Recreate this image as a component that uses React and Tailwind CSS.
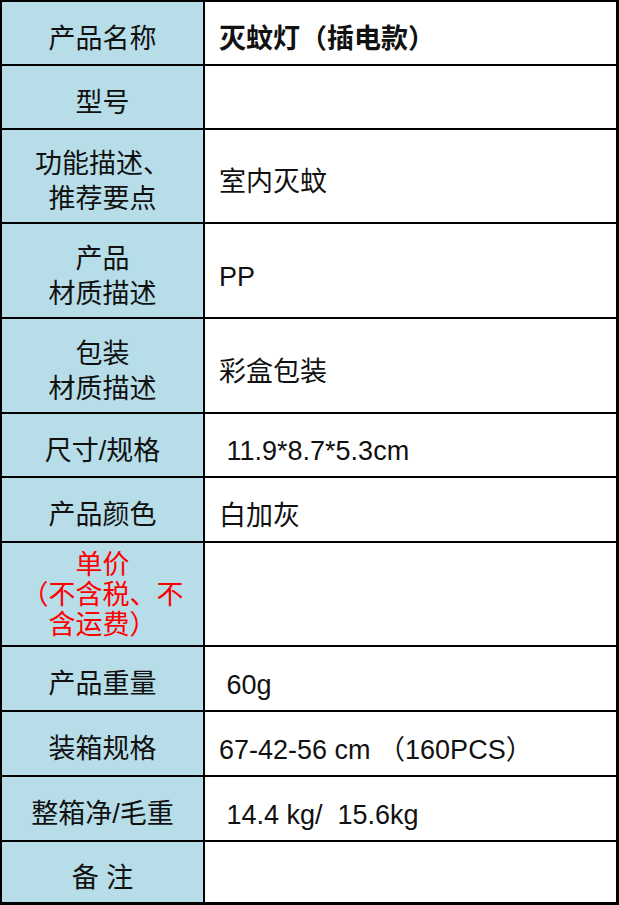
const rows = [
  { label: ["产品名称"], value: "灭蚊灯（插电款）", h: "h-[64px]", bold: true },
  { label: ["型号"], value: "", h: "h-[64px]" },
  { label: ["功能描述、", "推荐要点"], value: "室内灭蚊", h: "h-[94px]" },
  { label: ["产品", "材质描述"], value: "PP", h: "h-[95px]" },
  { label: ["包装", "材质描述"], value: "彩盒包装", h: "h-[95px]" },
  { label: ["尺寸/规格"], value: " 11.9*8.7*5.3cm", h: "h-[64px]" },
  { label: ["产品颜色"], value: "白加灰", h: "h-[65px]" },
  { label: ["单价", "（不含税、不", "含运费）"], value: "", h: "h-[104px]", red: true },
  { label: ["产品重量"], value: " 60g", h: "h-[65px]" },
  { label: ["装箱规格"], value: "67-42-56 cm （160PCS）", h: "h-[65px]" },
  { label: ["整箱净/毛重"], value: " 14.4 kg/  15.6kg", h: "h-[65px]" },
  { label: ["备 注"], value: "", h: "h-[60px]", last: true },
];

export default function App() {
  return (
    <div
      className="w-[619px] h-[905px] bg-white border-t-2 border-l-2 border-r-[3px] border-b-[3px] border-black flex flex-col text-[27px] text-[#111]"
      style={{ fontFamily: '"Liberation Sans", "Noto Sans CJK SC", sans-serif' }}
    >
      {rows.map((row, i) => (
        <div
          key={i}
          className={`flex shrink-0 ${row.h} ${row.last ? "" : "border-b-2 border-black"}`}
        >
          <div
            className={`w-[203px] shrink-0 border-r-2 border-black bg-[#b7dde8] flex flex-col items-center justify-center text-center ${
              row.red ? "text-[#ff0000] leading-[30px] pt-[2px]" : "leading-[35px] pt-[12px]"
            }`}
          >
            {row.label.map((line, j) => (
              <div key={j} className="whitespace-pre">
                {line}
              </div>
            ))}
          </div>
          <div
            className={`flex-1 flex items-center pl-[14px] pt-[13px] whitespace-pre ${
              row.bold ? "font-bold" : ""
            }`}
          >
            {row.value}
          </div>
        </div>
      ))}
    </div>
  );
}
